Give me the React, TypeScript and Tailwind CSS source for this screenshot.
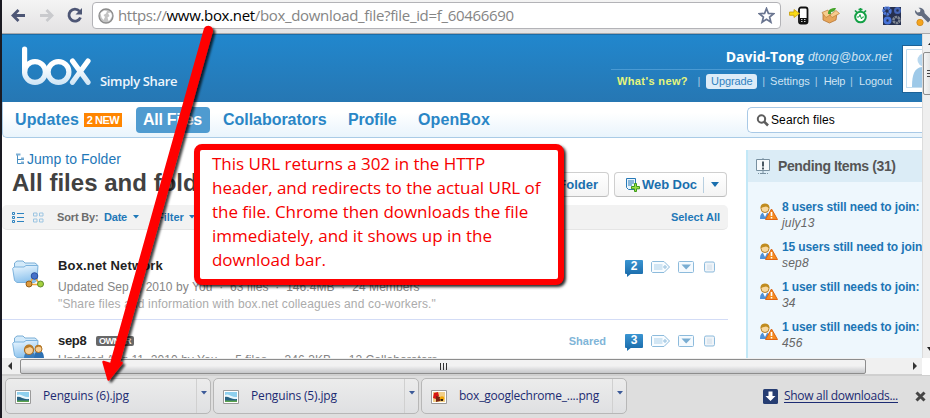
import React from "react";

const ARIAL = "font-['Liberation_Sans',Arial,sans-serif]";
const SEGOE = "font-['Open_Sans','Noto_Sans',sans-serif]";

function Toolbar() {
  return (
    <div className="flex h-[34px] shrink-0 items-start border-b border-[#a9a9ab] bg-gradient-to-b from-[#f4f4f4] to-[#e3e2e3] pl-[8px]">
      <svg width="82" height="30" viewBox="0 0 82 30" fill="none" className="shrink-0">
        <path d="M3.500 15.500H15M8.500 10L3 15.500L8.500 21" stroke="#4d5675" strokeWidth="2.800" />
        <path d="M30 15.500H41M36.500 10L42 15.500L36.500 21" stroke="#c9cacd" strokeWidth="2.800" />
        <path d="M69.500 11.200A6 6 0 1 0 70.500 17.500" stroke="#4d5675" strokeWidth="2.800" />
        <path d="M72 8V14.500H65.500Z" fill="#4d5675" />
      </svg>
      <div className="mt-[2px] flex h-[27px] w-[689px] shrink-0 items-center rounded-[4px] border border-[#b3b3b7] bg-white pl-[5px] pr-[5px]">
        <svg width="16" height="16" viewBox="0 0 16 16" className="shrink-0">
          <circle cx="8" cy="8" r="7" fill="#c4c4c4" stroke="#8b8b8b" strokeWidth="1.300" />
          <path d="M2.500 5L6 2.500L9 3L8 5.500L5.500 7L7 9L5.500 12L3.500 9.500ZM10 5L13 4.500L14 8L12 12L10.500 13L9.500 9.500L11.500 8Z" fill="#fff" />
        </svg>
        <div className={`${SEGOE} ml-[4px] flex-1 whitespace-nowrap text-[15px] leading-[25px] tracking-[-0.325px] text-[#858585]`}>
          https://<span className="text-black">www.box.net</span>/box_download_file?file_id=f_60466690
        </div>
        <svg width="17" height="17" viewBox="0 0 17 17">
          <path d="M8.500 1.500L10.400 6.400L15.600 6.700L11.600 10L12.900 15.200L8.500 12.300L4.100 15.200L5.400 10L1.400 6.700L6.600 6.400Z" fill="#fff" stroke="#6a7590" strokeWidth="1.700" />
        </svg>
      </div>
      <svg width="149" height="32" viewBox="781 0 149 32" className="shrink-0">
        <rect x="799" y="7.500" width="8.500" height="16" rx="2" fill="#fff" stroke="#111" strokeWidth="1.800" />
        <path d="M800 18H807V23H800Z" fill="#111" />
        <path d="M801 19.500h1.500M804 19.500h1.500M801 21.500h1.500M804 21.500h1.500" stroke="#ccc" />
        <path d="M789.500 12H794V9.500L799.500 13.500L794 17.500V15.300H789.500Z" fill="#f8da15" stroke="#c59b06" strokeWidth=".8" />
        <path d="M823 13L830 15.500L837 13L836 20L829.500 23L823 20Z" fill="#e7a65a" stroke="#b87330" strokeWidth=".8" />
        <path d="M822 12.500L828 10L830 15L826 17.500ZM830 15L836 10.500L839.500 13.500L832 17.500Z" fill="#f7cc8d" stroke="#bd8036" strokeWidth=".7" />
        <path d="M828 14C828 9.500 831 8 836 8C835 11 833 12 831 12L831 14Z" fill="#46a52c" />
        <circle cx="860.500" cy="17" r="5.300" fill="#fff" stroke="#13a045" strokeWidth="2" />
        <path d="M857 17H859L860 14.500L861.500 19L862.500 17H864" fill="none" stroke="#13a045" />
        <path d="M858.500 9.500H862.500M860.500 8V11M855 10.500L857 12.500M866 10.500L864 12.500" stroke="#13a045" strokeWidth="1.700" />
        <path d="M883 7H901V25H883Z" fill="#26304f" />
        <circle cx="887" cy="11" r="3.200" fill="none" stroke="#4f78d8" strokeWidth="3" strokeDasharray="2.400 .6" />
        <circle cx="897.500" cy="10.500" r="2.400" fill="none" stroke="#4565b5" strokeWidth="2.200" />
        <circle cx="887.500" cy="20.500" r="2.600" fill="none" stroke="#4773d9" strokeWidth="2.800" />
        <circle cx="896.500" cy="20" r="3" fill="none" stroke="#7e8591" strokeWidth="2.600" strokeDasharray="2.400 .6" />
        <path d="M915 10L917.500 12.500L920 12L920.500 9.500L918.500 7.800C922 7.500 925 10 924.500 13L931 19.500L928 22.500L921.500 16C918 16.500 914.500 14 915 10Z" fill="#626c80" />
        <circle cx="920" cy="22.500" r="3.200" fill="#f5a41d" stroke="#c9821a" strokeWidth=".7" />
      </svg>
    </div>
  );
}

function Bar() {
  return <span className="text-[#a9cbe4]">|</span>;
}

function Header() {
  return (
    <div className="flex h-[68px] shrink-0 border-t border-[#1b6ca8] bg-gradient-to-b from-[#2187cd] to-[#2677b3]">
      <svg width="76" height="60" viewBox="20 35 76 60" fill="none" className="ml-[18px] shrink-0">
        <defs>
          <linearGradient id="logo" gradientUnits="userSpaceOnUse" x1="0" y1="46" x2="0" y2="86">
            <stop offset=".5" stopColor="#fff" />
            <stop offset="1" stopColor="#c9e2f4" />
          </linearGradient>
        </defs>
        <g stroke="url(#logo)" strokeWidth="5.200" strokeLinecap="round">
          <path d="M24.600 49V71.500" />
          <circle cx="35" cy="72" r="10.400" />
          <circle cx="58.500" cy="72" r="10.400" />
          <path d="M72.500 61L88 82.300M88 61L72.500 82.300" />
        </g>
      </svg>
      <div className={`${SEGOE} ml-[4px] mt-[36px] whitespace-nowrap text-[13px] font-semibold leading-[20px] tracking-[-0.35px] text-[#eef6fc]`}>Simply Share</div>
      <div className={`${ARIAL} ml-auto flex w-[281px] flex-col text-[11px] text-[#cfe3f2]`}>
        <div className="flex h-[35px] items-end justify-end gap-[4px] border-b border-[#4a9ad3] pb-[3px] text-[12px] leading-[18px]">
          <b className={`${SEGOE} text-[14px] text-white`}>David-Tong</b>
          <i className="tracking-[0.19px]">dtong@box.net</i>
        </div>
        <div className="mt-[4px] flex h-[15px] items-center whitespace-nowrap leading-[15px]">
          <b className="ml-[6px] w-[81px] tracking-[0.38px] text-[#e6f67c]">What's new?</b>
          <Bar />
          <span className="ml-[6px] mr-[5px] h-[15px] w-[51px] rounded-[3px] bg-[#dcecf8] text-center tracking-[-0.1px] text-[#3182bf]">Upgrade</span>
          <Bar />
          <span className="mx-[5px]">Settings</span>
          <Bar />
          <span className="ml-[6px] mr-[5px] tracking-[-0.3px]">Help</span>
          <Bar />
          <span className="ml-[6px] tracking-[-0.1px]">Logout</span>
        </div>
      </div>
      <div className="ml-[10px] mr-0 mt-[10px] h-[48px] w-[20px] overflow-hidden border border-r-0 border-[#1c6297] bg-white pl-[3px] pt-[3px]">
        <svg width="17" height="39" viewBox="0 0 17 39">
          <path d="M.500 39V.500H17M.500 38.500H17" fill="none" stroke="#c3ddef" />
          <circle cx="18" cy="11" r="6.500" fill="#b9d8ef" />
          <path d="M6 38C6 24 9 18 18 18V38Z" fill="#9ec9e8" />
        </svg>
      </div>
    </div>
  );
}

function Nav() {
  return (
    <div className={`${ARIAL} flex h-[36px] shrink-0 items-center whitespace-nowrap rounded-bl-[5px] border-b border-l border-[#a9cbe6] bg-gradient-to-b from-white from-30% to-[#e9f4fc] pl-[12px] text-[16px] font-bold text-[#2a86c6]`}>
      <span className="w-[69px] tracking-[0.12px]">Updates</span>
      <span className="h-[14px] w-[38px] bg-[#ff8500] text-center text-[11px] leading-[15px] tracking-[-0.5px] text-white">2 NEW</span>
      <span className="ml-[14px] h-[26px] w-[74px] rounded-[4px] bg-[#4f9bd0] pl-[7px] leading-[25px] tracking-[-0.26px] text-white">All Files</span>
      <span className="ml-[13px] w-[125px] tracking-[-0.04px]">Collaborators</span>
      <span className="w-[70px] tracking-[-0.2px]">Profile</span>
      <span className="tracking-[0.12px]">OpenBox</span>
      <div className="ml-auto flex h-[26px] w-[175px] items-center rounded-l-[5px] border border-r-0 border-[#a9c9e6] bg-white pl-[8px] text-[12px] font-normal tracking-[0.1px] text-black">
        <svg width="15" height="14" viewBox="0 0 15 14" fill="none" stroke="#5d5d5d">
          <circle cx="5.500" cy="6" r="3.700" strokeWidth="2" />
          <path d="M8.200 8.700L12 12.500" strokeWidth="2.600" />
        </svg>
        <span className="leading-[22px]">Search files</span>
      </div>
    </div>
  );
}

function Caret({ className }: { className?: string }) {
  return <svg width="6" height="4" viewBox="0 0 6 4" className={className}><path d="M0 0H6L3 3.500Z" fill="currentColor" /></svg>;
}

function Folder({ children }: { children: React.ReactNode }) {
  return (
    <svg width="34" height="32" viewBox="0 0 34 32" className="shrink-0">
      <defs>
        <linearGradient id="fold" x1="0" y1="0" x2=".3" y2="1">
          <stop offset="0" stopColor="#eef8ff" />
          <stop offset="1" stopColor="#8fc4ee" />
        </linearGradient>
      </defs>
      <path d="M2.500 20V4L5 2H11L13 4H23L25.500 6V20Z" fill="#d3eafa" stroke="#7aaed6" />
      <path d="M.700 9.500L2 8H12L14 6.500H26L25 21.500L22.500 23.500H5L2.500 21.500Z" fill="url(#fold)" stroke="#7db3dd" />
      {children}
    </svg>
  );
}

function RowTools({ count, shared }: { count: number; shared?: boolean }) {
  return (
    <div className="flex h-[18px] items-start text-[11px] font-bold text-[#7fb5d8]">
      {shared && <span className="mr-[19px] leading-[15px]">Shared</span>}
      <div className="relative h-[14px] w-[18px] rounded-[1px] bg-gradient-to-b from-[#3a95d2] to-[#1c6fae] text-center text-[12px] leading-[13px] text-white">
        {count}
        <svg width="5" height="4" viewBox="0 0 5 4" className="absolute left-[2px] top-[13px]"><path d="M0 0H5L0 4Z" fill="#1c6fae" /></svg>
      </div>
      <svg width="67" height="16" viewBox="0 0 67 16" fill="none" stroke="#8dbbdc" className="ml-[7px]">
        <path d="M2.500 1.500H14L19.500 7L14 12.500H2.500L1.500 11.500V2.500Z" fill="#f8fcff" />
        <path d="M4 4H12.500V10H4Z" fill="#d2e6f4" stroke="none" />
        <circle cx="15" cy="7" r="1.200" />
        <rect x="28.500" y="1.500" width="15" height="11" rx="1" fill="#f5fafe" />
        <path d="M31.500 4.500H41L36.200 9.500Z" fill="#79add2" stroke="none" />
        <rect x="54.500" y="2" width="10" height="10" rx="1.500" fill="#f0f4f8" />
        <path d="M57 4.500H62V10H57Z" fill="#dfe8f0" stroke="none" />
      </svg>
    </div>
  );
}

const BTN = "flex h-[25px] items-center rounded-[4px] border border-[#cfcfcf] bg-gradient-to-b from-white to-[#f4f4f4] border-b-[#bdbdbd]";

function Files() {
  return (
    <div className={`${ARIAL} flex w-[744px] shrink-0 flex-col overflow-hidden whitespace-nowrap pr-[18px]`}>
      <div className="ml-[10px] mt-[12px] flex h-[18px] shrink-0 items-center">
        <svg width="15" height="12" viewBox="0 0 15 12" fill="none" stroke="#4a90c2" className="shrink-0">
          <path d="M5.500 1V10.500H12M5.500 6.500H12" />
          <path d="M4 1.500H8.500M9 5.500H12M9 9.500H12" strokeWidth="2" stroke="#7fb0d5" />
        </svg>
        <span className="text-[14px] leading-[18px] tracking-[0.04px] text-[#1f78b8]">Jump to Folder</span>
      </div>
      <div className="flex h-[37px] shrink-0">
        <h1 className="ml-[10px] text-[24px] font-bold leading-[30px] tracking-[0.02px] text-[#414141]">All files and folders</h1>
        <div className="ml-auto mt-[4px] flex h-[25px] gap-[5px] pr-[1px] text-[13px] font-bold text-[#1a6fae]">
          <div className={`${BTN} w-[96px] justify-end pr-[10px]`}>Folder</div>
          <div className={`${BTN} w-[113px] pl-[11px]`}>
            <svg width="14" height="14" viewBox="0 0 14 14" className="mr-[2px] shrink-0">
              <path d="M.500 .500H9.500V11.500H2.500L.500 9.500Z" fill="#e8f4fc" stroke="#2779b7" />
              <path d="M2 3H8M2 5H8M2 7H6" stroke="#2779b7" />
              <path d="M8.500 5.500H10.500V8.500H13.500V10.800H10.500V13.500H8.500V10.800H5.500V8.500H8.500Z" fill="#9be043" stroke="#3d9a1b" />
            </svg>
            <span className="tracking-[-0.05px]">Web Doc</span>
            <span className="ml-[6px] h-[16px] w-px bg-[#b8cfe0]" />
            <svg width="8" height="5" viewBox="0 0 8 5" className="ml-[7px]"><path d="M0 0H8L4 5Z" fill="#1a6fae" /></svg>
          </div>
        </div>
      </div>
      <div className="flex h-[25px] shrink-0 items-center rounded-[5px] border-b border-[#e5e5e5] bg-[#f2f2f2] pl-[10px] pr-[8px] text-[11px] font-bold text-[#1f78b8]">
        <svg width="32" height="11" viewBox="0 0 32 11" fill="none" className="shrink-0">
          <path d="M5 1.500H12M5 5.500H12M5 9.500H12" stroke="#2d83c0" />
          <path d="M.500 .500H2.500V2.500H.500ZM.500 4.500H2.500V6.500H.500ZM.500 8.500H2.500V10.500H.500Z" stroke="#2d83c0" />
          <path d="M21.500 1H25V4H21.500ZM27.500 1H31V4H27.500ZM21.500 7H25V10H21.500ZM27.500 7H31V10H27.500Z" stroke="#9cc5e2" />
        </svg>
        <span className="ml-[13px] w-[47px] tracking-[-0.15px] text-[#6c6c6c]">Sort By:</span>
        <span className="w-[29px] tracking-[-0.2px]">Date</span>
        <Caret />
        <span className="ml-[18px] w-[32px]">Filter</span>
        <Caret />
        <span className="ml-auto">Select All</span>
      </div>
      <div className="flex h-[90px] shrink-0 border-b border-[#d3dcf6] pl-[10px]">
        <div className="mt-[29px]">
          <Folder>
            <path d="M22 17L17 25.500H28Z" fill="none" stroke="#f0a83c" strokeWidth="1.500" />
            <circle cx="22.500" cy="17" r="3.300" fill="#4571c9" stroke="#294f9e" />
            <circle cx="17" cy="25" r="3" fill="#dd9a3d" stroke="#96601b" />
            <circle cx="28.500" cy="25" r="3" fill="#a5d13f" stroke="#60892a" />
          </Folder>
        </div>
        <div className="ml-[12px] mt-[27px] flex-1">
          <div className="text-[13px] font-bold leading-[18px] tracking-[0.16px] text-[#222]">Box.net Network</div>
          <div className="mt-[2px] whitespace-pre text-[12px] leading-[20px] tracking-[0.06px] text-[#858585]">Updated Sep 8, 2010 by You  ·  63 files  ·  146.4MB  ·  24 Members</div>
          <div className="text-[12px] leading-[15px] tracking-[0.144px] text-[#ababab]">"Share files and information with box.net colleagues and co-workers."</div>
        </div>
        <div className="mr-[11px] mt-[30px]"><RowTools count={2} /></div>
      </div>
      <div className="flex h-[60px] shrink-0 pl-[10px]">
        <div className="mt-[14px]">
          <Folder>
            <path d="M12 25C12 19 14 18 18 18S23 19 23 25Z" fill="#3b7dbc" />
            <path d="M22 25C22 19 24 17 27 17S32 19 32 25Z" fill="#2d70b2" />
            <circle cx="17" cy="16" r="4.500" fill="#f7cf96" stroke="#a86d22" strokeWidth="1.200" />
            <path d="M12.500 15C12 9 22 9 21.500 15L18 13Z" fill="#b87a26" />
            <circle cx="26.500" cy="15" r="3.500" fill="#f7cf96" stroke="#a86d22" />
            <path d="M23 14C23 9.500 30 9.500 30 14L27 12.500Z" fill="#b87a26" />
          </Folder>
        </div>
        <div className="ml-[12px] mt-[12px] flex-1">
          <div className="flex h-[18px] items-center text-[13px] font-bold leading-[18px] text-[#222]">
            <span className="w-[38px] tracking-[-0.3px]">sep8</span>
            <span className="h-[10px] w-[38px] rounded-[2px] bg-[#686868] text-center text-[9px] leading-[11px] tracking-[-0.45px] text-white">OWNER</span>
          </div>
          <div className="whitespace-pre text-[12px] leading-[20px] tracking-[0.06px] text-[#858585]">Updated Aug 11, 2010 by You  ·  5 files  ·  346.3KB  ·  12 Collaborators</div>
        </div>
        <div className="mr-[11px] mt-[14px]"><RowTools count={3} shared /></div>
      </div>
    </div>
  );
}

const PENDING = [
  ["8 users still need to join:", "july13"],
  ["15 users still need to join:", "sep8"],
  ["1 user still needs to join:", "34"],
  ["1 user still needs to join:", "456"],
];

function Pending() {
  return (
    <div className={`${ARIAL} mt-[12px] w-[176px] shrink-0 overflow-hidden whitespace-nowrap border-l-2 border-[#c3e8f7] bg-[#eef7fd]`}>
      <div className="flex h-[32px] items-center bg-[#dbecf6] pl-[8px]">
        <svg width="14" height="17" viewBox="0 0 14 17" fill="none" stroke="#7890a0" className="shrink-0">
          <path d="M.500 1.500H13.500V12.500H.500Z" fill="#f7fafc" />
          <path d="M7 0V1M4 15.500H10M2 15.500H3M11 15.500H12M7 13V15" />
          <path d="M7 3.500V8.500M7 9.500V11.500" stroke="#4a5862" strokeWidth="2" />
        </svg>
        <span className="ml-[8px] text-[14px] font-bold tracking-[-0.38px] text-[#555]">Pending Items (31)</span>
      </div>
      <div className="pt-[17px]">
        {PENDING.map(([title, name], i) => (
          <div key={i} className="flex h-[40px] pl-[11px] text-[12px]">
            <svg width="20" height="20" viewBox="0 0 20 20" className="mt-[3px] shrink-0">
              <path d="M1 17C1 12 3 10.500 6 10.500S11 12 11 17Z" fill="#4d91d9" />
              <path d="M4 11H8L6 15Z" fill="#fff" />
              <circle cx="6" cy="6.500" r="4" fill="#f8d9a0" stroke="#b78126" />
              <path d="M1.500 6C1 0 11 0 10.500 6L7 4.500Z" fill="#c08c20" />
              <path d="M12.500 7L18.500 17.500H6.500Z" fill="#f58a1e" stroke="#df6412" strokeLinejoin="round" />
              <path d="M12.500 10V14M12.500 15V16.500" stroke="#fff" strokeWidth="1.600" />
            </svg>
            <div className="ml-[3px]">
              <div className="font-bold leading-[17px] tracking-[-0.12px] text-[#1c75b5]">{title}</div>
              <div className="italic leading-[14px] tracking-[0.2px] text-[#666]">{name}</div>
            </div>
          </div>
        ))}
      </div>
    </div>
  );
}

function HScroll() {
  return (
    <div className="flex h-[17px] w-[920px] shrink-0 items-center border-b border-[#d0d0d0] bg-[#f0f0f0]">
      <svg width="18" height="8" viewBox="0 0 18 8"><path d="M10 0V8L6 4Z" fill="#333" /></svg>
      <div className="flex h-[15px] w-[846px] items-center justify-center gap-[2px] rounded-[2px] border border-[#8d8d8d] bg-gradient-to-b from-[#f2f2f2] from-45% to-[#c6c7ca]">
        <i className="h-[7px] w-px bg-[#333]" /><i className="h-[7px] w-px bg-[#333]" /><i className="h-[7px] w-px bg-[#333]" />
      </div>
      <svg width="8" height="8" viewBox="0 0 8 8" className="ml-[46px]"><path d="M1 0V8L5 4Z" fill="#333" /></svg>
    </div>
  );
}

function VScroll() {
  return (
    <div className="flex w-[8px] shrink-0 flex-col overflow-hidden border-l border-[#dcdcdc] bg-[#efefef]">
      <svg width="7" height="18" viewBox="0 0 7 18"><path d="M5 11L8.500 7V11Z" fill="#222" /></svg>
      <div className="flex h-[43px] w-[16px] shrink-0 flex-col justify-center gap-[2px] rounded-[2px] border border-[#8d8d8d] bg-gradient-to-r from-[#f6f6f6] to-[#ccc] pl-[3px]">
        <i className="h-px w-[8px] bg-[#444]" /><i className="h-px w-[8px] bg-[#444]" /><i className="h-px w-[8px] bg-[#444]" />
      </div>
      <svg width="7" height="5" viewBox="0 0 7 5" className="mb-[6px] mt-auto"><path d="M4 0H10L7 4Z" fill="#222" /></svg>
    </div>
  );
}

function Download({ name, flower, tracking }: { name: string; flower?: boolean; tracking: string }) {
  return (
    <div className="flex h-[36px] w-[206px] shrink-0 items-center rounded-[5px] border border-[#b7b7b7] bg-gradient-to-b from-[#ececec] to-[#dfe0e2]">
      <svg width="16" height="14" viewBox="0 0 16 14" className="ml-[9px] mt-[1px]">
        <path d="M.500 .500H15.500V13.500H.500Z" fill="#fff" stroke="#9a9a9a" />
        {flower ? (
          <>
            <path d="M2 2H14V12H2Z" fill="#f1cf89" />
            <path d="M3 3L7 2L8 6L5 9L2 8Z" fill="#d71515" />
            <path d="M5 6L9 7L9 11L5 12Z" fill="#7a2414" />
            <circle cx="11" cy="8.500" r="2.300" fill="#f0a606" />
            <path d="M9.500 9H12V11H9.500Z" fill="#332114" />
          </>
        ) : (
          <>
            <path d="M2 2H14V12H2Z" fill="#8fd0ee" />
            <path d="M2 5C6 3 7 7 14 7V9H2Z" fill="#e9f6fb" />
            <path d="M2 7C5 6 9 10 14 9V12H2Z" fill="#276181" />
            <path d="M2 10.500H14V12H2Z" fill="#5ba34e" />
          </>
        )}
      </svg>
      <span className={`ml-[12px] text-[12px] leading-[20px] text-[#1c2b72] ${tracking}`}>{name}</span>
      <div className="ml-auto h-[34px] w-[14px] border-l border-[#d0d0d0] pl-[4px] pt-[12px] text-[#3c5a98]"><Caret /></div>
    </div>
  );
}

function DownloadBar() {
  return (
    <div className={`${SEGOE} flex h-[43px] shrink-0 items-start gap-[2px] border-t border-[#cfcfcf] bg-[#dedede] pl-[3px] pt-[2px]`}>
      <Download name="Penguins (6).jpg" tracking="tracking-[-0.16px]" />
      <Download name="Penguins (5).jpg" tracking="tracking-[-0.16px]" />
      <Download name="box_googlechrome_....png" flower tracking="tracking-[-0.23px]" />
      <div className="ml-auto flex h-[36px] items-center pr-[4px]">
        <svg width="15" height="15" viewBox="0 0 15 15" className="mr-[6px]">
          <rect width="15" height="15" rx="1.500" fill="#263d72" />
          <path d="M5.500 2.500H9.500V7H12.500L7.500 12L2.500 7H5.500Z" fill="#fff" />
        </svg>
        <span className="whitespace-nowrap text-[12px] leading-[20px] tracking-[-0.289px] text-[#1c2b72] underline underline-offset-2">Show all downloads...</span>
        <svg width="11" height="11" viewBox="0 0 11 11" className="ml-[17px]"><path d="M1.500 1.500L9.500 9.500M9.500 1.500L1.500 9.500" stroke="#454545" strokeWidth="3" /></svg>
      </div>
    </div>
  );
}

function Annotation() {
  return (
    <>
      <svg width="150" height="370" viewBox="95 20 150 370" className="absolute left-[95px] top-[20px]">
        <defs>
          <filter id="sh" x="-20%" y="-10%" width="150%" height="120%">
            <feDropShadow dx="2.500" dy="2" stdDeviation="1.200" floodColor="#000" floodOpacity=".75" />
          </filter>
        </defs>
        <g filter="url(#sh)">
          <path d="M208.300 30.500L115 363" stroke="#f00" strokeWidth="9.500" strokeLinecap="round" />
          <path d="M103.500 362L113 365L121.500 363L108.500 379.500Z" fill="#f00" stroke="#f00" strokeWidth="2.500" strokeLinejoin="round" />
        </g>
      </svg>
      <div className={`${SEGOE} absolute left-[194px] top-[144px] h-[141px] w-[370px] whitespace-nowrap rounded-[8px] border-[6px] border-[#f00] bg-white pl-[12px] pt-[2px] text-[17px] leading-[24px] tracking-[-0.03px] text-[#f60000] shadow-[2px_2px_3px_rgba(0,0,0,0.85)]`}>
        <div>This URL returns a 302 in the HTTP</div>
        <div>header, and redirects to the actual URL of</div>
        <div>the file. Chrome then downloads the file</div>
        <div>immediately, and it shows up in the</div>
        <div>download bar.</div>
      </div>
    </>
  );
}

export default function App() {
  return (
    <div className="relative flex h-[418px] w-[930px] flex-col overflow-hidden border-l-2 border-[#1a1a22] bg-white">
      <Toolbar />
      <div className="flex h-[324px] shrink-0">
        <div className="flex w-[920px] shrink-0 flex-col">
          <Header />
          <Nav />
          <div className="flex h-[220px] overflow-hidden">
            <Files />
            <Pending />
          </div>
        </div>
        <VScroll />
      </div>
      <HScroll />
      <DownloadBar />
      <div className="absolute left-[-2px] top-0"><Annotation /></div>
    </div>
  );
}
